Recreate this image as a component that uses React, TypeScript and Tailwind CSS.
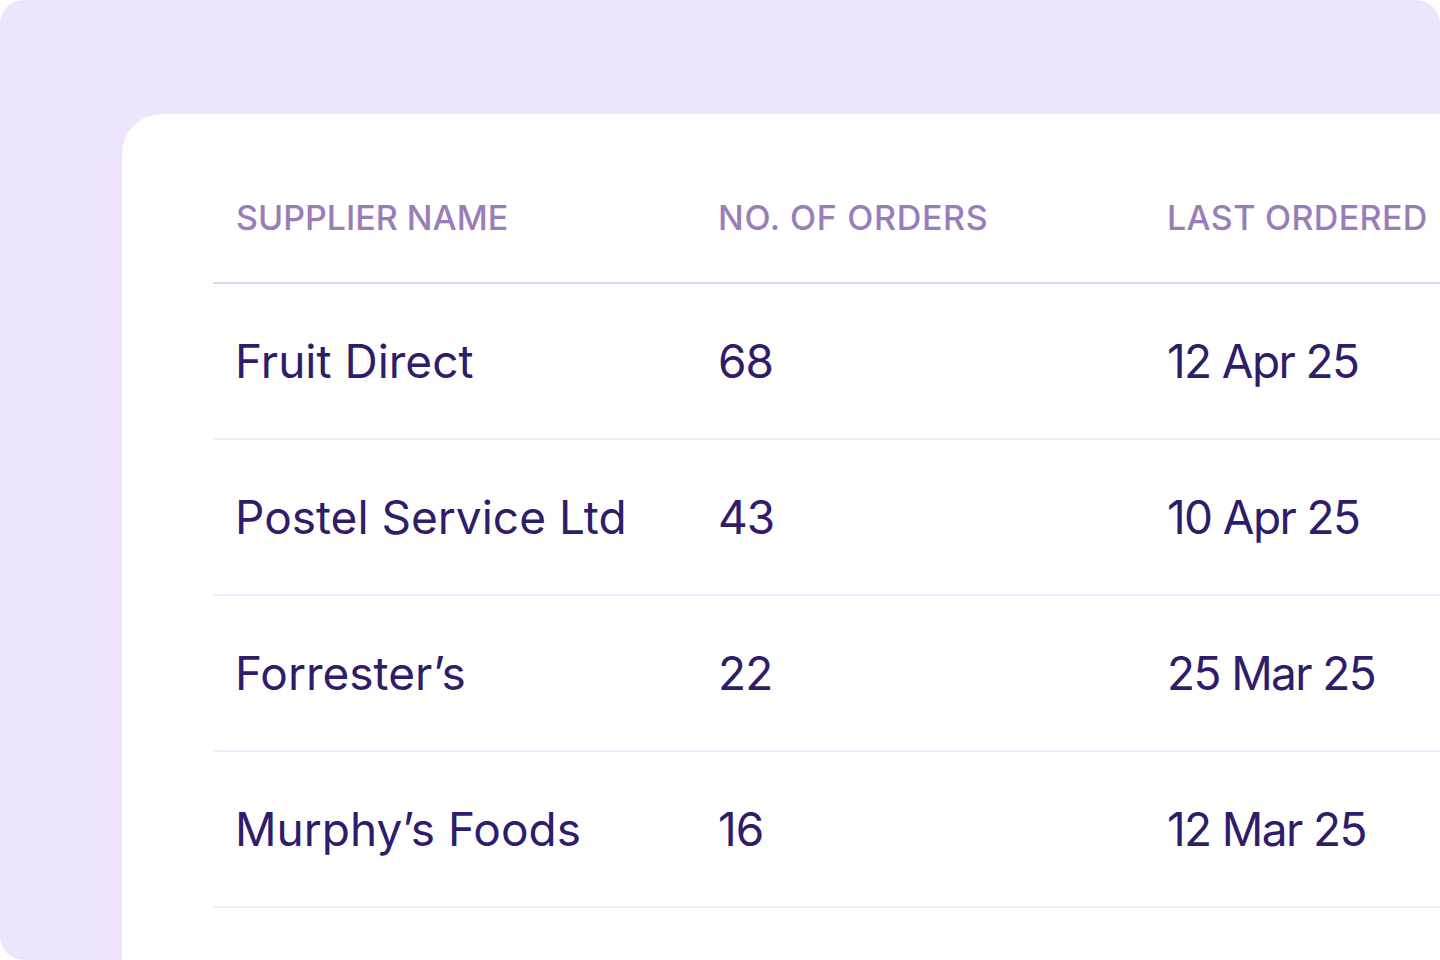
import React from "react";

const rows = [
  { name: "Fruit Direct", orders: "68", last: "12 Apr 25" },
  { name: "Postel Service Ltd", orders: "43", last: "10 Apr 25" },
  { name: "Forrester\u2019s", orders: "22", last: "25 Mar 25" },
  { name: "Murphy\u2019s Foods", orders: "16", last: "12 Mar 25" },
];

export default function App() {
  return (
    <div className="w-[1440px] h-[960px] bg-white" style={{ fontFamily: "Inter, 'Noto Sans', sans-serif" }}>
      <div className="w-full h-full rounded-[24px] overflow-hidden bg-[#EEE5FD] pl-[122px] pt-[114px] flex">
        <div className="flex-1 bg-white rounded-tl-[40px] pl-[91px]">
          <div className="h-[170px] pt-[38px] flex items-center border-b-2 border-[#E0D6FB] text-[34px] text-[#9A7DB8] font-medium">
            <div className="w-[505px] pl-[23px] whitespace-nowrap">SUPPLIER NAME</div>
            <div className="w-[449px] whitespace-nowrap tracking-[0.02em]">NO. OF ORDERS</div>
            <div className="whitespace-nowrap tracking-[0.01em]">LAST ORDERED</div>
          </div>
          {rows.map((r) => (
            <div key={r.name} className="h-[156px] flex items-center border-b-2 border-[#EFEAFD] text-[46px] text-[#2F1C6A]">
              <div className="w-[505px] pl-[22px] whitespace-nowrap">{r.name}</div>
              <div className="w-[449px] proportional-nums tracking-[-0.02em]">{r.orders}</div>
              <div className="whitespace-nowrap proportional-nums tracking-[-0.035em]">{r.last}</div>
            </div>
          ))}
        </div>
      </div>
    </div>
  );
}
